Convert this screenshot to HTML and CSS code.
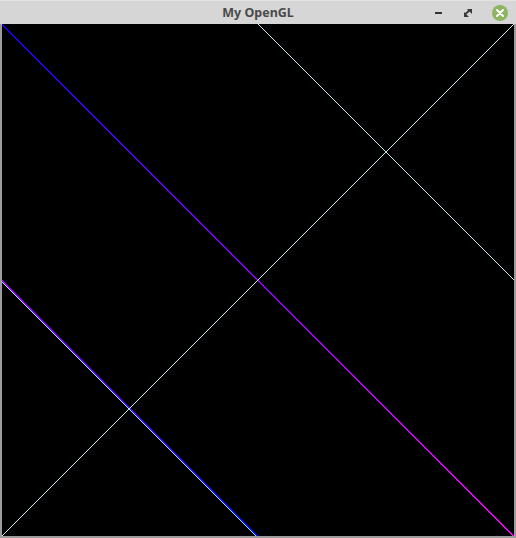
FILE: index.html
```html
<!DOCTYPE html>
<html>
<head>
<meta charset="utf-8">
<link rel="stylesheet" href="styles.css">
</head>
<body>
<div class="window">
  <div class="titlebar">
    <span class="title">My OpenGL</span>
    <div class="controls">
      <span class="btn min"></span>
      <svg class="btn max" width="10" height="10" viewBox="0 0 10 10">
        <polygon points="4,1 9,1 9,6" fill="#3a3a3a"/>
        <polygon points="1,4 1,9 6,9" fill="#3a3a3a"/>
        <rect x="2" y="3" width="6" height="2" transform="rotate(-45 5 5)" fill="#3a3a3a"/>
      </svg>
      <svg class="btn close" width="18" height="18" viewBox="0 0 18 18">
        <circle cx="9" cy="9" r="8" fill="#8cb461"/>
        <path d="M6 6 L12 12 M12 6 L6 12" stroke="#fff" stroke-width="2" stroke-linecap="round"/>
      </svg>
    </div>
  </div>
  <div class="frame">
    <svg class="canvas" width="512" height="512" viewBox="0 0 512 512">
      <defs>
        <linearGradient id="g1" x1="0" y1="0" x2="1" y2="1">
          <stop offset="0" stop-color="#1a00ff"/>
          <stop offset="1" stop-color="#ff00ff"/>
        </linearGradient>
        <linearGradient id="g2" x1="0" y1="0" x2="1" y2="1">
          <stop offset="0" stop-color="#a000ff"/>
          <stop offset="1" stop-color="#0010ff"/>
        </linearGradient>
      </defs>
      <rect width="512" height="512" fill="#000"/>
      <line x1="0" y1="0.5" x2="512" y2="512.5" stroke="url(#g1)" stroke-width="1.2" shape-rendering="crispEdges"/>
      <line x1="-1" y1="256.5" x2="255" y2="512.5" stroke="#8fe8ff" stroke-width="1" shape-rendering="crispEdges"/>
      <line x1="0" y1="256.5" x2="256" y2="512.5" stroke="url(#g2)" stroke-width="1.2" shape-rendering="crispEdges"/>
      <line x1="0" y1="512" x2="512" y2="0" stroke="#cfeaf2" stroke-width="1" shape-rendering="crispEdges"/>
      <line x1="256" y1="0" x2="512" y2="256" stroke="#cfeaf2" stroke-width="1" shape-rendering="crispEdges"/>
    </svg>
  </div>
</div>
</body>
</html>
```
FILE: styles.css
```css
html, body {
  margin: 0;
  padding: 0;
  background: #000;
}
.window {
  width: 516px;
  height: 538px;
  background: #9c9c9c;
  display: flex;
  flex-direction: column;
}
.titlebar {
  height: 24px;
  background: #d6d6d6;
  border-top: 1px solid #e4e4e4;
  box-sizing: border-box;
  position: relative;
  display: flex;
  align-items: center;
  justify-content: center;
}
.title {
  font-family: "Noto Sans", "DejaVu Sans", sans-serif;
  font-weight: 700;
  font-size: 12.5px;
  color: #4a4a4a;
  margin-top: -1px;
}
.controls {
  position: absolute;
  right: 7px;
  top: 2px;
  display: flex;
  align-items: center;
  height: 19px;
}
.btn {
  display: block;
}
.min {
  width: 7px;
  height: 2px;
  background: #333;
  margin-right: 21px;
  margin-top: 1px;
}
.max {
  margin-right: 18px;
}
.frame {
  padding: 0 2px 2px 2px;
  display: flex;
}
.canvas {
  display: block;
  background: #000;
}
```
